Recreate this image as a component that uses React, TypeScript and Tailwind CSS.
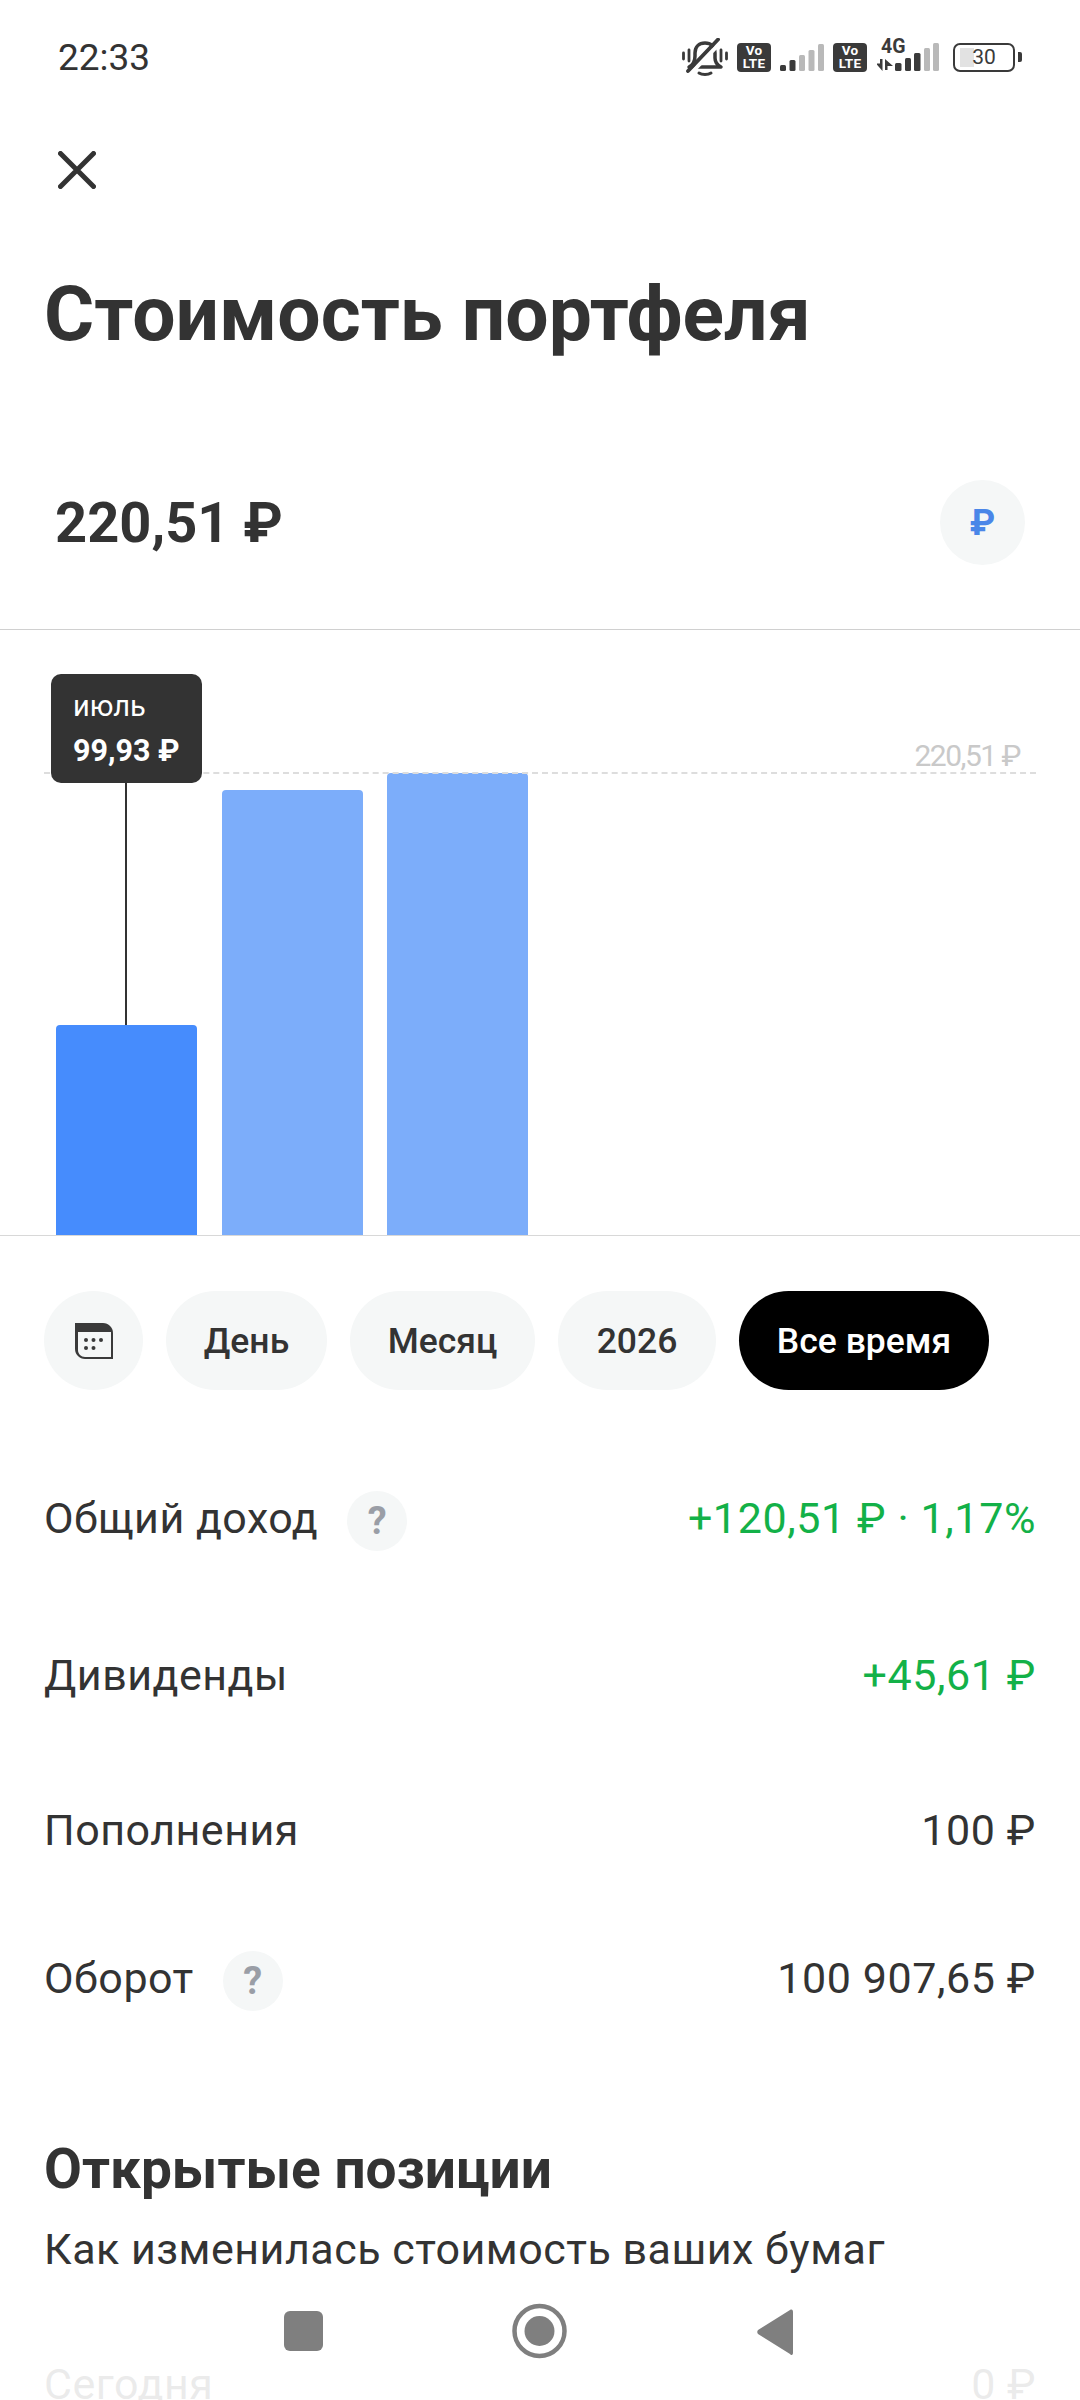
import React from "react";

const Bell = () => (
  <svg width="46" height="38" viewBox="0 0 46 38" fill="none">
    <path d="M7 29C11 27 13 23 13 18V15C13 9 17 5 23 5C29 5 33 9 33 15V20C33 24 35 27 39 29H7Z" stroke="#3a3a3a" strokeWidth="3.500" strokeLinejoin="round" />
    <path d="M17 35C20 37 26 37 29 35" stroke="#3a3a3a" strokeWidth="3" strokeLinecap="round" />
    <path d="M1.500 15V21M7 12V23M39 12V23M44.500 15V21" stroke="#3a3a3a" strokeWidth="2.800" strokeLinecap="round" />
    <path d="M10 34L40 3" stroke="#ffffff" strokeWidth="4" />
    <path d="M6 33L36 1.500" stroke="#3a3a3a" strokeWidth="3.800" strokeLinecap="round" />
  </svg>
);

const Volte = () => (
  <div className="flex h-[29px] w-[34px] flex-col items-center justify-center rounded-[4px] bg-[#3a3a3a] text-[13.500px] leading-[13px] font-bold tracking-[0.3px] text-white">
    <span>Vo</span>
    <span>LTE</span>
  </div>
);

const Signal = ({ dark }: { dark: number }) => {
  const bars = [6, 11, 16, 21, 27];
  return (
    <svg width="44" height="27" viewBox="0 0 44 27">
      {bars.map((h, i) => (
        <rect key={i} x={i * 9.500} y={27 - h} width="6" height={h} rx="1.500" fill={i < dark ? "#3a3a3a" : "#b9b9b9"} />
      ))}
    </svg>
  );
};

const Battery = () => (
  <div className="flex items-center gap-[3px]">
    <div className="relative flex h-[29px] w-[62px] items-center justify-center rounded-[7px] border-[2.500px] border-[#3a3a3a] text-[21px] leading-none text-[#3a3a3a]">
      <div className="absolute top-[3px] bottom-[3px] left-[5px] w-[14px] bg-[#e2e2e2]" />
      <span className="relative">30</span>
    </div>
    <div className="h-[10px] w-[4px] rounded-r-[2px] bg-[#3a3a3a]" />
  </div>
);

const Question = () => (
  <div className="flex h-[60px] w-[60px] translate-y-[3px] items-center justify-center rounded-full bg-[#f5f7f7] text-[38px] leading-none font-bold text-[#9a9ea6]">
    ?
  </div>
);

const Chip = ({ label, width, active }: { label: string; width: string; active?: boolean }) => (
  <div
    className={`flex h-[99px] items-center justify-center rounded-full pt-[2px] text-[35.500px] font-medium ${width} ${
      active ? "bg-black text-white" : "bg-[#f5f7f7] text-[#333333]"
    }`}
  >
    {label}
  </div>
);

const Row = ({ label, value, green, help, mt }: { label: string; value: string; green?: boolean; help?: boolean; mt: string }) => (
  <div className={`flex h-[60px] items-center justify-between ${mt}`}>
    <div className="flex items-center gap-[29px]">
      <span className="text-[43px] tracking-[0.5px] text-[#333333]">{label}</span>
      {help && <Question />}
    </div>
    <span className={green ? "text-[43px] tracking-[0.6px] text-[#13b148]" : "text-[43px] tracking-[0.6px] text-[#333333]"}>{value}</span>
  </div>
);

export default function App() {
  return (
    <div className="relative h-[2400px] w-[1080px] overflow-hidden bg-white font-['Roboto',sans-serif] text-[#333333]">
      <div className="flex h-[114px] items-center justify-between pr-[58px] pl-[58px]">
        <span className="translate-y-[1px] text-[37px] text-[#333333]">22:33</span>
        <div className="flex items-center">
          <Bell />
          <div className="ml-[9px]"><Volte /></div>
          <div className="ml-[9px]"><Signal dark={2} /></div>
          <div className="ml-[9px]"><Volte /></div>
          <div className="relative mb-[4px] ml-[10px] h-[32px] w-[62px]">
            <svg className="absolute top-0 left-0" width="62" height="32" viewBox="0 0 62 32">
              <path d="M3 20H5.500V32L-1 24.500H3Z" fill="#3a3a3a" />
              <path d="M8 20L16 27H10.500V31H8Z" fill="#3a3a3a" />
              <rect x="18" y="24" width="6.500" height="8" rx="1.500" fill="#3a3a3a" />
              <rect x="28" y="19" width="6" height="13" rx="1.500" fill="#3a3a3a" />
              <rect x="37" y="14" width="6.500" height="18" rx="1.500" fill="#3a3a3a" />
              <rect x="47" y="9" width="6" height="23" rx="1.500" fill="#b9b9b9" />
              <rect x="56" y="4" width="6" height="28" rx="1.500" fill="#b9b9b9" />
            </svg>
            <span className="absolute top-[-1px] left-[4px] text-[19.500px] leading-[18px] font-bold text-[#3a3a3a]">4G</span>
          </div>
          <div className="ml-[14px]"><Battery /></div>
        </div>
      </div>

      <div className="flex h-[112px] items-center pl-[58px]">
        <svg width="38" height="38" viewBox="0 0 38 38" fill="none">
          <path d="M2.500 2.500L35.500 35.500M35.500 2.500L2.500 35.500" stroke="#333333" strokeWidth="5" strokeLinecap="round" />
        </svg>
      </div>

      <div className="flex h-[176px] items-center pl-[44px]">
        <h1 className="text-[76.800px] leading-none font-bold text-[#333333]">Стоимость портфеля</h1>
      </div>

      <div className="flex items-center justify-between border-b-[1.500px] border-[#d0d0d0] pt-[78px] pr-[55px] pb-[64px] pl-[55px]">
        <span className="text-[56px] leading-none font-bold">220,51 ₽</span>
        <div className="flex h-[85px] w-[85px] items-center justify-center rounded-full bg-[#f5f7f7] text-[36px] leading-none font-bold text-[#4a86e8]">₽</div>
      </div>

      <div className="relative flex h-[606px] items-end gap-[24.500px] border-b-[1.500px] border-[#d8d8d8] pl-[56px]">
        <div className="h-[210px] w-[141px] rounded-t-[4px] bg-[#468cfd]" />
        <div className="h-[445px] w-[141px] rounded-t-[4px] bg-[#7cadfa]" />
        <div className="h-[462px] w-[141px] rounded-t-[4px] bg-[#7cadfa]" />

        <div className="absolute top-[142px] right-[44px] left-[44px] border-t-[2px] border-dashed border-[#dddddd]" />
        <span className="absolute top-[103px] right-[60px] text-[30px] tracking-[-1.500px] text-[#c9c9c9]">220,51 ₽</span>

        <div className="absolute top-[153px] bottom-[210px] left-[125px] w-[2px] bg-[#333333]" />
        <div className="absolute top-[43.500px] left-[51px] flex h-[109px] w-[151px] flex-col justify-center rounded-[10px] bg-[#333333] pl-[22px] text-white">
          <span className="text-[29px] leading-[36px]">июль</span>
          <span className="mt-[9px] text-[30.500px] leading-[36px] font-bold">99,93 ₽</span>
        </div>
      </div>

      <div className="flex gap-[23px] pt-[55px] pl-[44px]">
        <div className="flex h-[99px] w-[99px] items-center justify-center rounded-full bg-[#f5f7f7]">
          <svg width="38" height="36" viewBox="0 0 38 36" fill="none">
            <path d="M0 0H28C33.500 0 38 4.500 38 10V36H10C4.500 36 0 31.500 0 26Z" fill="#3a3a3a" />
            <path d="M3 9H36V34H10C6 34 3 31 3 27Z" fill="#f5f7f7" />
            <circle cx="11" cy="17" r="2" fill="#3a3a3a" />
            <circle cx="18.500" cy="17" r="2" fill="#3a3a3a" />
            <circle cx="26" cy="17" r="2" fill="#3a3a3a" />
            <circle cx="11" cy="25" r="2" fill="#3a3a3a" />
            <circle cx="18.500" cy="25" r="2" fill="#3a3a3a" />
          </svg>
        </div>
        <Chip label="День" width="w-[161px]" />
        <Chip label="Месяц" width="w-[185px]" />
        <Chip label="2026" width="w-[158px]" />
        <Chip label="Все время" width="w-[250px]" active />
      </div>

      <div className="px-[44px]">
        <Row label="Общий доход" value="+120,51 ₽ · 1,17%" green help mt="mt-[98px]" />
        <Row label="Дивиденды" value="+45,61 ₽" green mt="mt-[97px]" />
        <Row label="Пополнения" value="100 ₽" mt="mt-[95px]" />
        <Row label="Оборот" value="100 907,65 ₽" help mt="mt-[88px]" />

        <h2 className="mt-[131px] text-[55px] leading-[60px] font-bold">Открытые позиции</h2>
        <p className="mt-[20px] text-[43px] leading-[60px] tracking-[0.5px]">Как изменилась стоимость ваших бумаг</p>
        <div className="mt-[75px] flex justify-between text-[43px] leading-[60px] tracking-[0.5px] text-[#333333]">
          <span>Сегодня</span>
          <span>0 ₽</span>
        </div>
      </div>

      <div className="absolute right-0 bottom-0 left-0 flex h-[118px] items-center justify-center bg-white/90">
        <svg width="1080" height="118" viewBox="0 0 1080 118">
          <rect x="284" y="29" width="39" height="40" rx="6" fill="#7f7f7f" />
          <circle cx="539.500" cy="49" r="25" fill="none" stroke="#7f7f7f" strokeWidth="4.500" />
          <circle cx="539.500" cy="49" r="15" fill="#7f7f7f" />
          <path d="M790 28C792 27 793 28 793 30V71C793 73 791 74 790 72L758 52C757 51 757 49 758 48Z" fill="#7f7f7f" />
        </svg>
      </div>
    </div>
  );
}
